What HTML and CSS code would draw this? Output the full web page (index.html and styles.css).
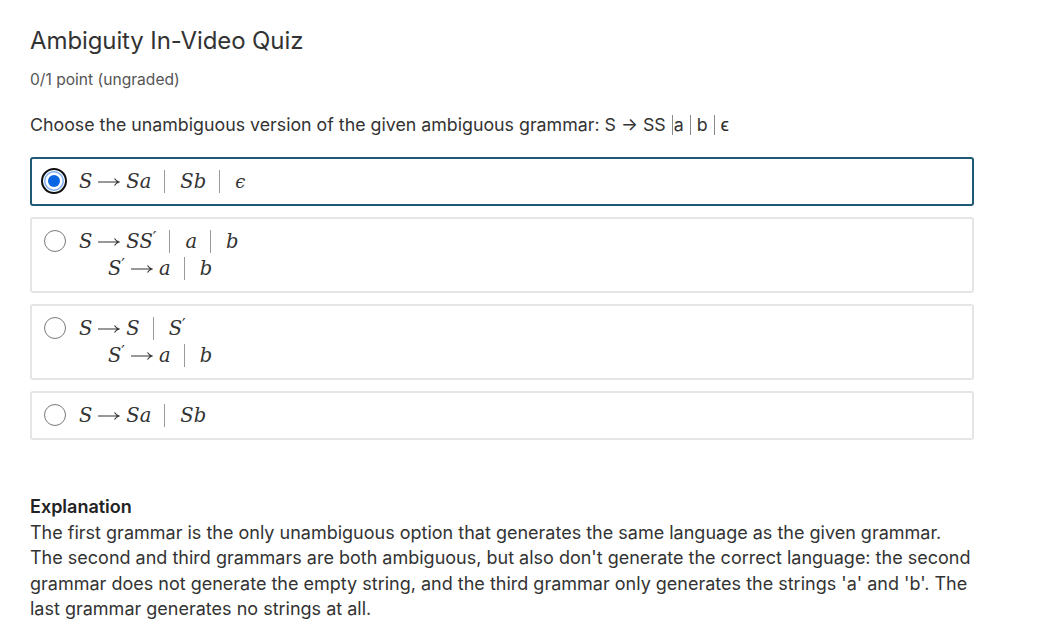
FILE: index.html
```html
<!DOCTYPE html>
<html>
<head>
<meta charset="utf-8">
<link rel="stylesheet" href="styles.css">
</head>
<body>
<main class="page">
  <h1 class="title">Ambiguity In-Video Quiz</h1>
  <div class="points">0/1 point (ungraded)</div>
  <p class="question">Choose the unambiguous version of the given ambiguous grammar: S → SS <span class="qbar"></span>a <span class="qbar"></span> b <span class="qbar"></span> ϵ</p>

  <div class="options">
    <label class="option selected">
      <span class="radio checked"><span class="dot"></span></span>
      <span class="math">
        <span class="row"><i>S</i><svg class="arr" viewBox="0 0 22 10" width="22" height="10"><path d="M0 5H21M16.5 1.5Q18 4 21 5Q18 6 16.5 8.5" fill="none" stroke="#333" stroke-width="1.1"/></svg><i>Sa</i><span class="bar"></span><i>Sb</i><span class="bar"></span><i class="eps">ϵ</i></span>
      </span>
    </label>
    <label class="option">
      <span class="radio"></span>
      <span class="math">
        <span class="row"><i>S</i><svg class="arr" viewBox="0 0 22 10" width="22" height="10"><path d="M0 5H21M16.5 1.5Q18 4 21 5Q18 6 16.5 8.5" fill="none" stroke="#333" stroke-width="1.1"/></svg><i>SS</i><span class="prime">′</span><span class="bar"></span><i>a</i><span class="bar"></span><i>b</i></span>
        <span class="row indent"><i>S</i><span class="prime">′</span><svg class="arr" viewBox="0 0 22 10" width="22" height="10"><path d="M0 5H21M16.5 1.5Q18 4 21 5Q18 6 16.5 8.5" fill="none" stroke="#333" stroke-width="1.1"/></svg><i>a</i><span class="bar"></span><i>b</i></span>
      </span>
    </label>
    <label class="option">
      <span class="radio"></span>
      <span class="math">
        <span class="row"><i>S</i><svg class="arr" viewBox="0 0 22 10" width="22" height="10"><path d="M0 5H21M16.5 1.5Q18 4 21 5Q18 6 16.5 8.5" fill="none" stroke="#333" stroke-width="1.1"/></svg><i>S</i><span class="bar"></span><i>S</i><span class="prime">′</span></span>
        <span class="row indent"><i>S</i><span class="prime">′</span><svg class="arr" viewBox="0 0 22 10" width="22" height="10"><path d="M0 5H21M16.5 1.5Q18 4 21 5Q18 6 16.5 8.5" fill="none" stroke="#333" stroke-width="1.1"/></svg><i>a</i><span class="bar"></span><i>b</i></span>
      </span>
    </label>
    <label class="option">
      <span class="radio"></span>
      <span class="math">
        <span class="row"><i>S</i><svg class="arr" viewBox="0 0 22 10" width="22" height="10"><path d="M0 5H21M16.5 1.5Q18 4 21 5Q18 6 16.5 8.5" fill="none" stroke="#333" stroke-width="1.1"/></svg><i>Sa</i><span class="bar"></span><i>Sb</i></span>
      </span>
    </label>
  </div>

  <section class="explanation">
    <div class="exp-title">Explanation</div>
    <p class="exp-text">The first grammar is the only unambiguous option that generates the same language as the given grammar.<br>The second and third grammars are both ambiguous, but also don't generate the correct language: the second<br>grammar does not generate the empty string, and the third grammar only generates the strings 'a' and 'b'. The<br>last grammar generates no strings at all.</p>
  </section>
</main>
</body>
</html>
```

FILE: styles.css
```css
html, body {
  margin: 0;
  padding: 0;
  background: #ffffff;
}

body {
  font-family: Inter, "Noto Sans", sans-serif;
  color: #333333;
}

.page {
  padding: 26px 0 0 30px;
  width: 944px;
}

.title {
  margin: 0;
  font-size: 24px;
  font-weight: 400;
  line-height: 30px;
  color: #333333;
  letter-spacing: -0.1px;
}

.points {
  margin-top: 14px;
  font-size: 15.6px;
  line-height: 20px;
  color: #555555;
}

.question {
  margin: 23px 0 0 0;
  font-size: 17.8px;
  line-height: 24px;
  color: #333333;
}

.qbar {
  display: inline-block;
  width: 1px;
  height: 20px;
  background: #8a8a8a;
  vertical-align: -4px;
  margin: 0 1px;
}

.options {
  margin-top: 20px;
  display: flex;
  flex-direction: column;
  gap: 11px;
}

.option {
  display: flex;
  align-items: flex-start;
  gap: 13px;
  border: 2px solid #e5e5e5;
  border-radius: 3px;
  padding: 9px 12px;
  background: #ffffff;
}

.option.selected {
  border-color: #1d5a73;
}

.radio {
  flex: none;
  width: 22px;
  height: 22px;
  border: 1px solid #7a7a7a;
  border-radius: 50%;
  margin-top: 2px;
  box-sizing: border-box;
  display: flex;
  align-items: center;
  justify-content: center;
  background: #fff;
}

.radio.checked {
  width: 26px;
  height: 26px;
  margin-top: 0;
  margin-left: -3px;
  margin-right: -1px;
  border: 2px solid #111111;
  box-shadow: inset 0 0 0 1px #ffffff, inset 0 0 0 2.5px #7fb0f5;
}

.radio .dot {
  width: 12px;
  height: 12px;
  border-radius: 50%;
  background: #0b66e4;
}

.math {
  display: flex;
  flex-direction: column;
  font-family: "DejaVu Serif", "Liberation Serif", serif;
  font-size: 19.5px;
  color: #333333;
}

.row {
  display: flex;
  align-items: center;
  height: 27px;
  white-space: nowrap;
}

.row.indent {
  padding-left: 29px;
}

.row i {
  font-style: italic;
}

.arr {
  flex: none;
  margin: 1px 6px 0 6px;
}

.prime {
  font-size: 16px;
  margin-left: 0;
  align-self: flex-start;
  margin-top: 0;
}

.bar {
  display: inline-block;
  width: 1px;
  height: 23px;
  background: #9a9a9a;
  margin: 0 15px 0 13px;
}

.eps {
  font-size: 18px;
}

.explanation {
  margin-top: 55px;
}

.exp-title {
  font-size: 18px;
  font-weight: 600;
  line-height: 24px;
  color: #222222;
}

.exp-text {
  margin: 1px 0 0 0;
  font-size: 18px;
  line-height: 25.4px;
  color: #333333;
  white-space: nowrap;
}
```
